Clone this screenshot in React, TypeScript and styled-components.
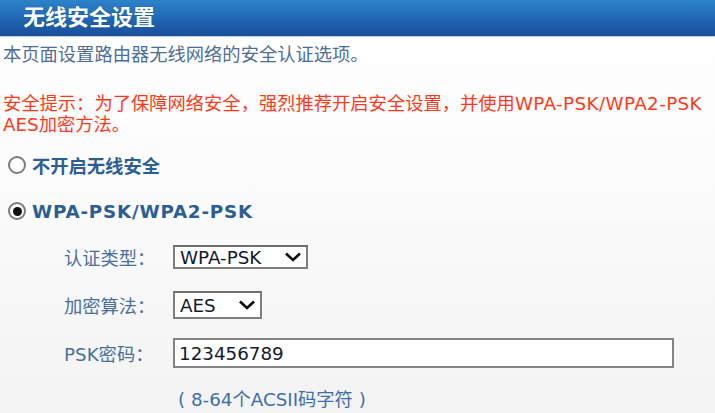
import styled, { createGlobalStyle } from "styled-components";

const GlobalStyle = createGlobalStyle`
  html, body {
    margin: 0;
    padding: 0;
    background: #f4f4f4;
  }
  * {
    box-sizing: border-box;
  }
`;

const FONT = `"DejaVu Sans", "Noto Sans CJK SC", sans-serif`;

const Page = styled.div`
  width: 715px;
  height: 413px;
  overflow: hidden;
  font-family: ${FONT};
  font-size: 18.3px;
  background: linear-gradient(#ffffff 0%, #fcfcfc 40%, #f3f3f3 100%);
`;

const Header = styled.div`
  height: 37px;
  padding-left: 23px;
  display: flex;
  align-items: center;
  background: linear-gradient(#2c83c8 0%, #2169b5 50%, #1a4f9c 97%);
  border-bottom: 1px solid #b9d0ea;
`;

const Title = styled.h1`
  margin: -6px 0 0;
  font-size: 22px;
  font-weight: bold;
  color: #ffffff;
  text-shadow: 0 0 1px rgba(0, 30, 80, 0.6);
`;

const Content = styled.div`
  padding-left: 3px;
  display: flex;
  flex-direction: column;
`;

const Intro = styled.p`
  margin: 7px 0 0;
  line-height: 21px;
  color: #4f6e94;
`;

const Warning = styled.p`
  margin: 28px 0 0;
  line-height: 21px;
  color: #ff3a1c;
`;

// Latin runs are set a touch wider, like the original page's font
const Latin = styled.span<{ $sp: number }>`
  letter-spacing: ${(p) => p.$sp}px;
`;

const RadioRow = styled.label<{ $top: number }>`
  display: flex;
  align-items: center;
  height: 30px;
  margin-top: ${(p) => p.$top}px;
  padding-left: 5px;
  gap: 6px;
  font-weight: bold;
  color: #2d5d95;
`;

const RadioDot = styled.span<{ $checked?: boolean }>`
  width: 18px;
  height: 18px;
  border-radius: 50%;
  border: 2px solid #7c7c7c;
  background: #ffffff;
  display: flex;
  align-items: center;
  justify-content: center;

  &::after {
    content: "";
    width: 9px;
    height: 9px;
    border-radius: 50%;
    background: ${(p) => (p.$checked ? "#111111" : "transparent")};
  }
`;

const FieldRow = styled.div<{ $top: number; $h: number }>`
  display: flex;
  align-items: center;
  height: ${(p) => p.$h}px;
  margin-top: ${(p) => p.$top}px;
  padding-left: 61px;
`;

const FieldLabel = styled.span`
  width: 109px;
  color: #4a6f9e;
`;

const SelectBox = styled.div<{ $w: number }>`
  width: ${(p) => p.$w}px;
  height: 100%;
  border: 2px solid #7f7f7f;
  border-top-color: #6f6f6f;
  background: #ffffff;
  display: flex;
  align-items: center;
  justify-content: space-between;
  padding: 0 4px 0 5px;
  color: #121a2c;
`;

const TextInput = styled.input`
  width: 501px;
  height: 100%;
  border: 2px solid #848484;
  background: #ffffff;
  padding: 0 4px;
  font-family: ${FONT};
  font-size: 18.3px;
  color: #121a2c;
  outline: none;
`;

const Hint = styled.p`
  margin: 21px 0 0;
  padding-left: 175px;
  line-height: 21px;
  color: #3f6ea6;
`;

const Chevron = () => (
  <svg width="18" height="10" viewBox="0 0 18 10">
    <polyline
      points="2,1.5 9,8 16,1.5"
      fill="none"
      stroke="#0b0b0b"
      strokeWidth="2.6"
      strokeLinejoin="miter"
    />
  </svg>
);

interface SelectProps {
  value: string;
  width: number;
}

const FakeSelect = ({ value, width }: SelectProps) => (
  <SelectBox $w={width}>
    <span>{value}</span>
    <Chevron />
  </SelectBox>
);

export default function App() {
  return (
    <Page>
      <GlobalStyle />
      <Header>
        <Title>无线安全设置</Title>
      </Header>
      <Content>
        <Intro>本页面设置路由器无线网络的安全认证选项。</Intro>
        <Warning>
          安全提示：为了保障网络安全，强烈推荐开启安全设置，并使用
          <Latin $sp={0.4}>WPA-PSK/WPA2-PSK</Latin>
          <br />
          AES加密方法。
        </Warning>
        <RadioRow $top={15}>
          <RadioDot />
          不开启无线安全
        </RadioRow>
        <RadioRow $top={16}>
          <RadioDot $checked />
          <Latin $sp={0.8}>WPA-PSK/WPA2-PSK</Latin>
        </RadioRow>
        <FieldRow $top={19} $h={24}>
          <FieldLabel>认证类型：</FieldLabel>
          <FakeSelect value="WPA-PSK" width={135} />
        </FieldRow>
        <FieldRow $top={22} $h={28}>
          <FieldLabel>加密算法：</FieldLabel>
          <FakeSelect value="AES" width={89} />
        </FieldRow>
        <FieldRow $top={19} $h={30}>
          <FieldLabel>PSK密码：</FieldLabel>
          <TextInput defaultValue="123456789" />
        </FieldRow>
        <Hint>( 8-64个ACSII码字符 )</Hint>
      </Content>
    </Page>
  );
}
